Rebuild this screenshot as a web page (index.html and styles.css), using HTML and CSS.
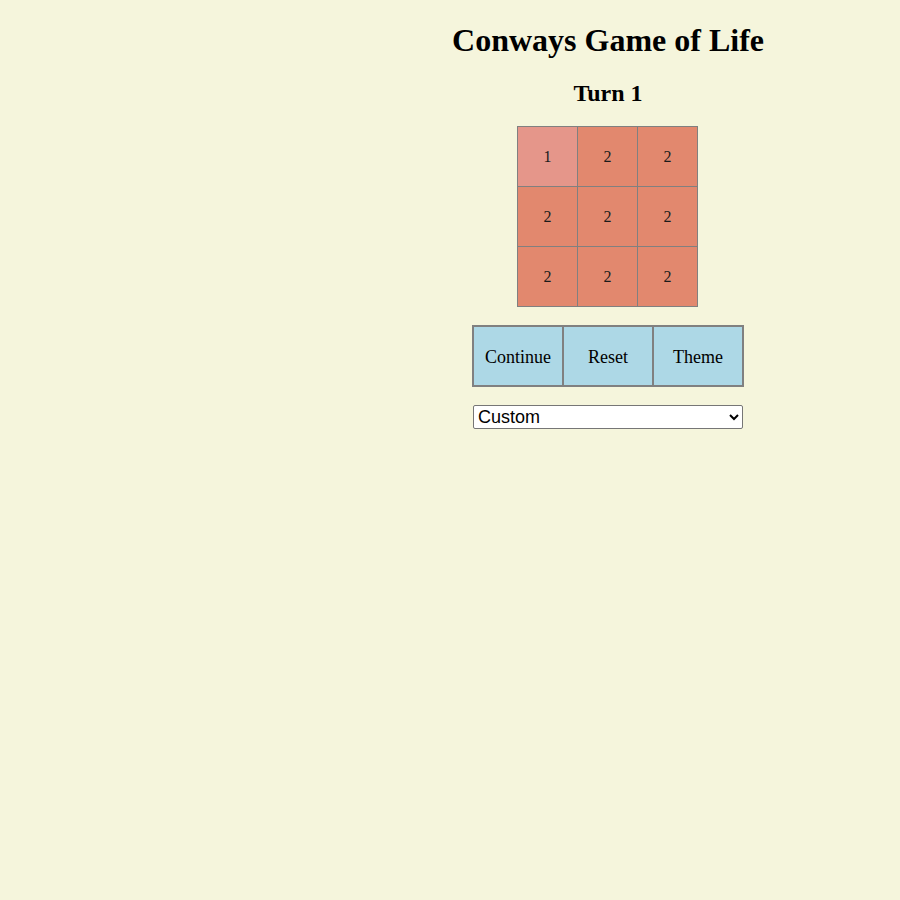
FILE: index.html
```html
<!DOCTYPE html>
<html>
<head>
<meta charset="utf-8">
<title>Conways Game of Life</title>
<link rel="stylesheet" href="styles.css">
</head>
<body>
<div class="app">
  <h1 class="title">Conways Game of Life</h1>
  <h2 class="turn">Turn 1</h2>
  <table class="board">
    <tr><td class="cell cell-new">1</td><td class="cell">2</td><td class="cell">2</td></tr>
    <tr><td class="cell">2</td><td class="cell">2</td><td class="cell">2</td></tr>
    <tr><td class="cell">2</td><td class="cell">2</td><td class="cell">2</td></tr>
  </table>
  <div class="controls">
    <button class="btn">Continue</button>
    <button class="btn">Reset</button>
    <button class="btn">Theme</button>
  </div>
  <select class="preset">
    <option>Custom</option>
    <option>Glider</option>
    <option>Blinker</option>
  </select>
</div>
</body>
</html>
```

FILE: styles.css
```css
html {
  background: #f5f5dc;
}
body {
  margin: 8px;
  width: 1200px;
  background: #f5f5dc;
  font-family: "Liberation Serif", "Times New Roman", serif;
  color: #000;
}
.app {
  display: flex;
  flex-direction: column;
  align-items: center;
  text-align: center;
}
.title {
  font-size: 32px;
  font-weight: bold;
  margin: 14px 0 21px;
}
.turn {
  font-size: 24px;
  font-weight: bold;
  margin: 0 0 19px;
}
.board {
  border-collapse: collapse;
  margin: 0 1px 18px 0;
}
.cell {
  width: 59px;
  height: 59px;
  padding: 0;
  border: 1px solid #808080;
  background: #e2886e;
  font-size: 16px;
  text-align: center;
  vertical-align: middle;
  color: #1a1a1a;
}
.cell-new {
  background: #e5968a;
}
.controls {
  display: grid;
  grid-template-columns: repeat(3, 90px);
  padding-right: 2px;
  margin-bottom: 18px;
}
.btn {
  width: 92px;
  height: 62px;
  box-sizing: border-box;
  background: #add8e6;
  border: 2px solid #808080;
  font-family: "Liberation Serif", "Times New Roman", serif;
  font-size: 18px;
  color: #000;
  padding: 2px 0 0;
}
.preset {
  width: 270px;
  height: 24px;
  font-family: "Liberation Sans", Arial, sans-serif;
  font-size: 18px;
  background: #fff;
  border: 1px solid #767676;
  border-radius: 2px;
  color: #000;
}
```
